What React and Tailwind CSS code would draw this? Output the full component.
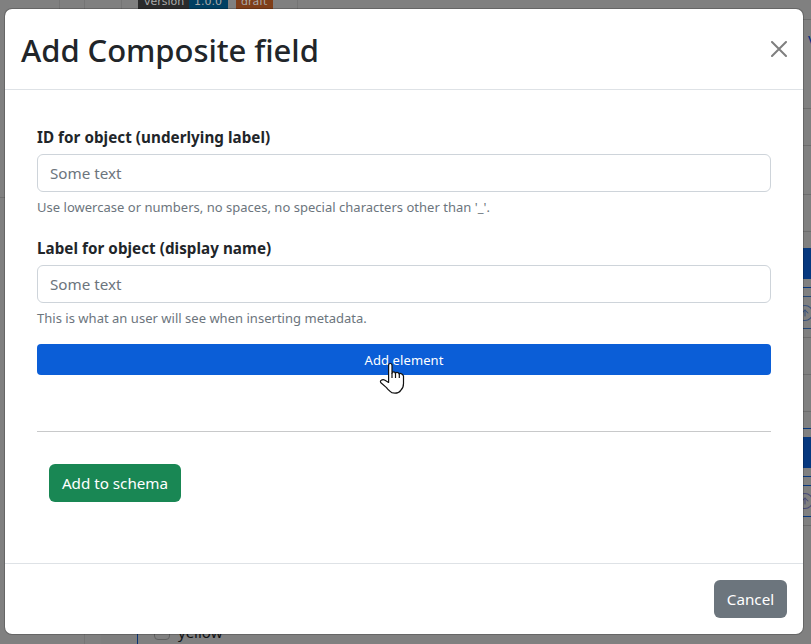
import { ArrowUpCircle } from "lucide-react";

function Field({ label, hint }) {
  return (
    <div className="mb-4 flex flex-col">
      <label className="mb-[5px] mt-[3px] h-6 whitespace-nowrap text-[15.2px] font-bold leading-6 tracking-[0.05px]">{label}</label>
      <input
        type="text"
        placeholder="Some text"
        className="h-[38px] w-full rounded-md border border-[#ced4da] px-3 text-[15.2px] text-[#212529] placeholder:text-[#6c757d]"
      />
      <p className="mt-[5px] h-5 whitespace-nowrap text-[13px] leading-[21px] tracking-[0.02px] text-[#6c757d]">{hint}</p>
    </div>
  );
}

function UploadRow({ color }) {
  return (
    <div className={`flex items-center border-y ${color}`}>
      <ArrowUpCircle size={18} strokeWidth={1.4} className="-ml-[7px] shrink-0" />
    </div>
  );
}

function Page() {
  return (
    <div className="flex h-full w-full justify-between overflow-hidden bg-[#808080]">
      <div className="flex h-full flex-col justify-between">
        <div className="flex h-[198px] border-b border-[#6f6f6f]">
          <div className="w-[60px] border-r border-[#757575]" />
          <div className="w-[25px] border-r border-[#757575]" />
          <div className="w-[37px] border-r border-[#757575]" />
          <div className="flex h-[9px] w-[176px] items-end border-r border-[#757575] pl-4 font-['DejaVu_Sans',sans-serif] text-[11px] leading-[15px] text-[#aaa]">
            <span className="w-[51px] bg-[#2b2b2b] pl-1.5">version</span>
            <span className="w-[39px] bg-[#003f62] pl-[5px]">1.0.0</span>
            <span className="ml-2 w-[37px] bg-[#7f3e19] pl-[5px]">draft</span>
          </div>
        </div>
        <div className="flex h-[24px]">
          <div className="w-[85px] border-r border-[#757575]" />
          <div className="w-[16px]" />
          <div className="w-[37px] border-r border-[#093275] bg-[#7e7e7e]" />
          <div className="flex items-start gap-2 pl-4 pt-0.5 text-[15px] leading-5 text-[#111315]">
            <span className="mt-0.5 h-4 w-4 rounded border border-[#606060]" />
            <span>yellow</span>
          </div>
        </div>
      </div>
      <div className="flex w-2 shrink-0 flex-col overflow-hidden">
        <div className="h-5 border-b border-[#6d6d6d]" />
        <div className="h-[89px] border-b border-[#6d6d6d] pl-[5px] pt-1.5 text-[15px] leading-6 text-[#00287f]">v</div>
        <div className="h-[37px] border-b border-[#6d6d6d]" />
        <div className="h-[49px] border-b border-[#6d6d6d]" />
        <div className="h-[37px] border-b border-[#6d6d6d]" />
        <div className="mt-4 h-[31px] bg-[#06387f]" />
        <div className="h-[9px] border-b border-[#06387f]" />
        <div className="mt-2 flex h-[33px] flex-col *:grow">
          <UploadRow color="border-[#234777] text-[#37517c]" />
        </div>
        <div className="h-[9px] border-b border-[#6d6d6d]" />
        <div className="h-[37px] border-b border-[#6d6d6d]" />
        <div className="h-[37px] border-b border-[#6d6d6d]" />
        <div className="h-[17px] border-b border-[#06387f]" />
        <div className="mt-2 h-[31px] bg-[#06387f]" />
        <div className="h-[9px] border-b border-[#06387f]" />
        <div className="mt-2 flex h-[32px] flex-col *:grow">
          <UploadRow color="border-[#06387f] text-[#474978]" />
        </div>
        <div className="h-[9px] border-b border-[#6d6d6d]" />
      </div>
    </div>
  );
}

function Pointer() {
  return (
    <svg
      viewBox="0 0 26 32"
      className="absolute left-[342px] top-[18px] h-8 w-[26px]"
      fill="#fff"
      stroke="#111"
      strokeWidth="1.2"
      strokeLinejoin="round"
    >
      <path d="M9.6 18V3.5Q9.6 1.5 11.3 1.5T13 3.5V11.2Q13 9.8 14.6 9.8T16.4 11.5Q16.4 10.4 18 10.4T20.2 12Q20.5 11.2 22.1 11.6T24.5 14V21.5Q24.5 26 21.8 28.3Q19.8 31.2 16 31.2Q12.6 31.2 10.5 28.8Q8.8 27.5 7.5 25.6L2.2 21Q0.6 19.2 2.3 18.3Q3.9 17.2 6 18.2L9.6 20.4Z" />
      <path d="M13 11V16M16.5 11.5V16M20.3 12V16" fill="none" />
    </svg>
  );
}

export default function App() {
  return (
    <div className="relative h-[644px] w-[811px] overflow-hidden font-['Noto_Sans',sans-serif] text-[#212529]">
      <Page />
      <div
        role="dialog"
        className="absolute left-1 top-2 flex h-[627px] w-[800px] flex-col rounded-lg border border-black/20 bg-white bg-clip-padding"
      >
        <header className="flex h-[81px] items-center justify-between border-b border-[#dee2e6] pl-4 pr-4">
          <h1 className="whitespace-nowrap pt-px text-[31px] font-medium leading-[48px] tracking-[-0.06px]">Add Composite field</h1>
          <button aria-label="Close" className="pb-px text-[#7f7f7f]">
            <svg viewBox="0 0 16 16" className="h-4 w-4" fill="none" stroke="currentColor" strokeWidth="2" strokeLinecap="round">
              <path d="M1 1L15 15M15 1L1 15" />
            </svg>
          </button>
        </header>
        <main className="flex h-[473px] flex-col px-8 pt-8">
          <Field label="ID for object (underlying label)" hint="Use lowercase or numbers, no spaces, no special characters other than '_'." />
          <Field label="Label for object (display name)" hint="This is what an user will see when inserting metadata." />
          <div className="relative">
            <button className="block h-[31px] w-full rounded bg-[#0b5ed7] pt-px text-[13px] leading-[30px] tracking-[0.1px] text-white">Add element</button>
            <Pointer />
          </div>
          <hr className="mt-14 border-[#c8c9ca]" />
          <button className="ml-3 mt-8 h-[38px] w-[132px] rounded-md bg-[#198754] text-[15.2px] text-white">Add to schema</button>
        </main>
        <footer className="flex grow items-center justify-end border-t border-[#dee2e6] px-4">
          <button className="h-[38px] w-[73px] rounded-md bg-[#6c757d] text-[15.2px] text-white">Cancel</button>
        </footer>
      </div>
    </div>
  );
}
